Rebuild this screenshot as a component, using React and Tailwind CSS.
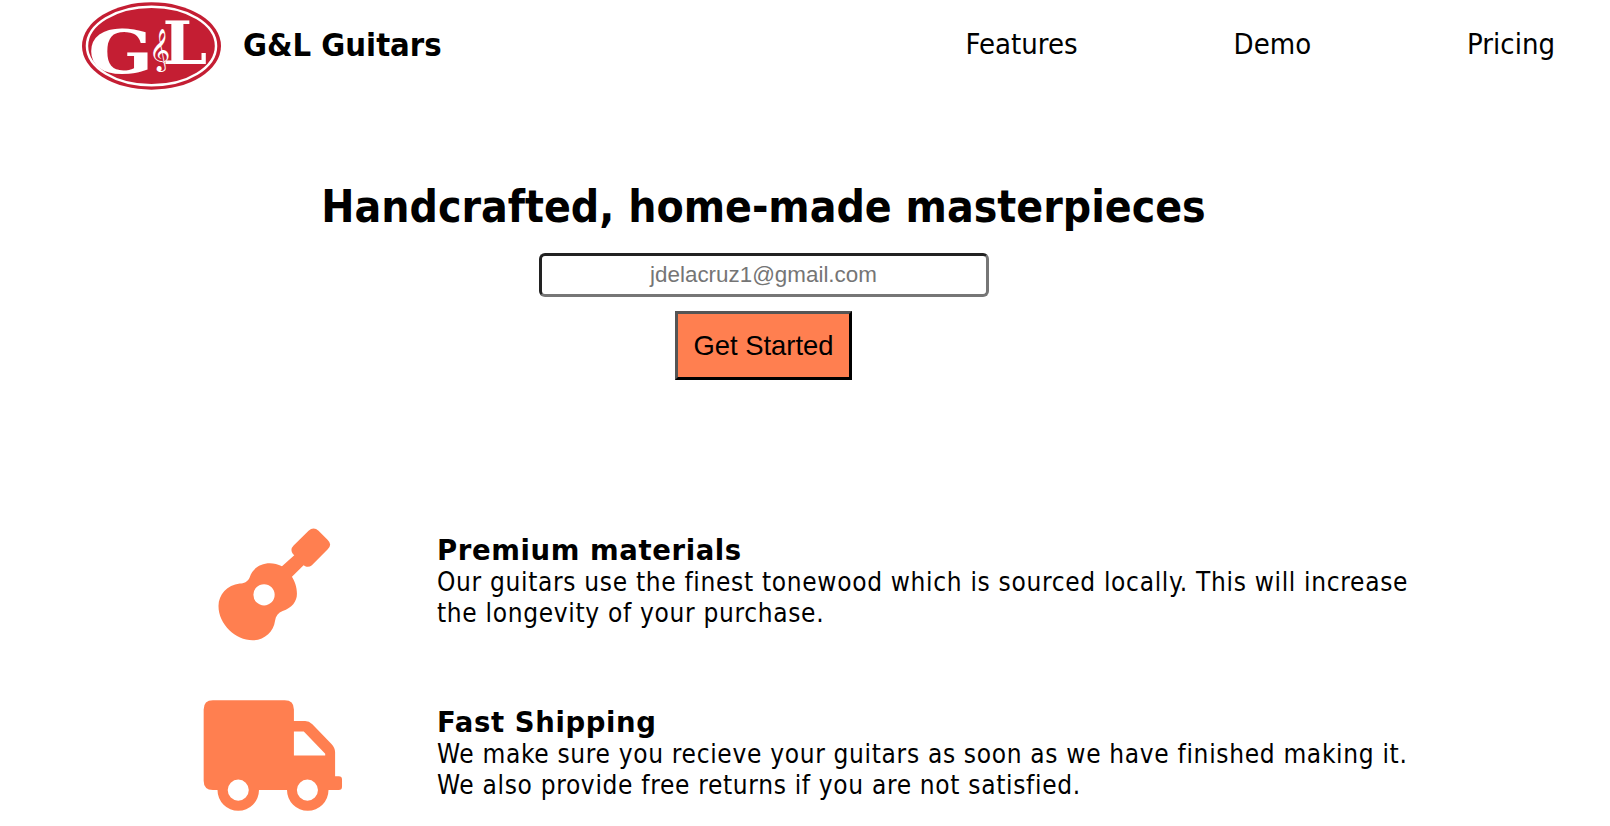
const Logo = () => (
  <svg viewBox="0 0 140 88" className="w-[139px] h-[88px] shrink-0 translate-y-px">
    <ellipse cx="70" cy="44" rx="70" ry="44" className="fill-[#c41e33]" />
    <ellipse cx="70" cy="44" rx="65" ry="39.5" fill="none" stroke="#fff" strokeWidth="2.5" />
    <text x="6" y="71" fontFamily="DejaVu Serif" fontWeight="700" fontSize="60" fill="#fff" textLength="66" lengthAdjust="spacingAndGlyphs">G</text>
    <text x="81" y="62" fontFamily="DejaVu Serif" fontWeight="700" fontSize="60" fill="#fff" textLength="45" lengthAdjust="spacingAndGlyphs">L</text>
    <text x="67" y="60" fontFamily="DejaVu Sans" fontSize="36" fill="#fff">{'\u{1D11E}'}</text>
  </svg>
)

const GuitarIcon = () => (
  <svg viewBox="80 40 345 340" className="w-[115px] h-[113px]" fill="currentColor" fillRule="evenodd">
    <path d="M275 155 C235 135 190 150 178 188 C172 203 160 206 148 207 C110 212 84 240 84 275 C84 330 135 378 187 378 C222 378 250 352 254 320 C256 305 264 295 277 290 C305 280 320 262 320 238 C320 218 313 200 305 187 L340 152 L345 155 Q355 160 365 152 L412 105 Q428 90 412 75 L385 48 Q370 35 355 48 L310 93 Q298 105 308 118 L312 122 Z M221 209 A32 32 0 1 0 221 273 A32 32 0 1 0 221 209 Z" />
  </svg>
)

const TruckIcon = () => (
  <svg viewBox="40 555 425 340" className="w-[142px] h-[113px] -translate-x-px -translate-y-px" fill="currentColor" fillRule="evenodd">
    <path d="M70 557 H288 Q316 557 316 585 V620 H350 Q362 620 372 630 L430 690 Q441 702 441 715 V788 H452 Q462 788 462 798 V820 Q462 830 452 830 H421 A63 63 0 0 1 295 830 H210 A63 63 0 0 1 84 830 H70 Q42 830 42 802 V585 Q42 557 70 557 Z M316 652 V725 H411 V720 L346 652 Z M147 798 A32 32 0 1 0 147 862 A32 32 0 1 0 147 798 Z M357 798 A32 32 0 1 0 357 862 A32 32 0 1 0 357 798 Z" />
  </svg>
)

const features = [
  {
    title: 'Premium materials',
    body: 'Our guitars use the finest tonewood which is sourced locally. This will increase the longevity of your purchase.',
    icon: <GuitarIcon />,
  },
  {
    title: 'Fast Shipping',
    body: 'We make sure you recieve your guitars as soon as we have finished making it. We also provide free returns if you are not satisfied.',
    icon: <TruckIcon />,
  },
]

export default function App() {
  return (
    <div className="min-h-screen bg-white text-black font-['DejaVu_Sans',sans-serif]">
      <header className="flex items-center justify-between h-[90px] pl-[82px] pr-[55px]">
        <div className="flex items-center gap-[22px]">
          <Logo />
          <span className="text-[32.5px] font-bold font-stretch-condensed">G&amp;L Guitars</span>
        </div>
        <nav className="flex gap-[156px] text-[29px] font-stretch-condensed">
          <a>Features</a>
          <a>Demo</a>
          <a>Pricing</a>
        </nav>
      </header>

      <section className="flex flex-col items-center w-[1527px] mt-[88px]">
        <h1 className="text-[44.1px] leading-[58px] font-bold font-stretch-condensed">Handcrafted, home-made masterpieces</h1>
        <input
          placeholder="jdelacruz1@gmail.com"
          className="mt-[17px] w-[450px] h-[44px] rounded-[6px] border-[3px] border-t-[#222] border-l-[#222] border-r-[#767676] border-b-[#767676] text-center text-[22.4px] font-['Liberation_Sans',sans-serif] placeholder:text-[#757575]"
        />
        <button className="mt-[14px] w-[177px] h-[69px] bg-[#ff7f50] border-[3px] border-t-[#555] border-l-[#555] border-r-black border-b-black text-[27.4px] font-['Liberation_Sans',sans-serif]">
          Get Started
        </button>
      </section>

      <section className="flex flex-col gap-[59px] mt-[148px] pl-[204px]">
        {features.map(f => (
          <div key={f.title} className="flex items-center">
            <div className="w-[233px] flex justify-center pr-[93px] text-[#ff7f50]">{f.icon}</div>
            <div className="w-[990px] pb-[6px] text-[26px] leading-[31px]">
              <h3 className="font-bold text-[27.5px] leading-[33px] tracking-[0.6px]">{f.title}</h3>
              <p className="font-stretch-condensed tracking-[0.68px] w-[985px]">{f.body}</p>
            </div>
          </div>
        ))}
      </section>
    </div>
  )
}
